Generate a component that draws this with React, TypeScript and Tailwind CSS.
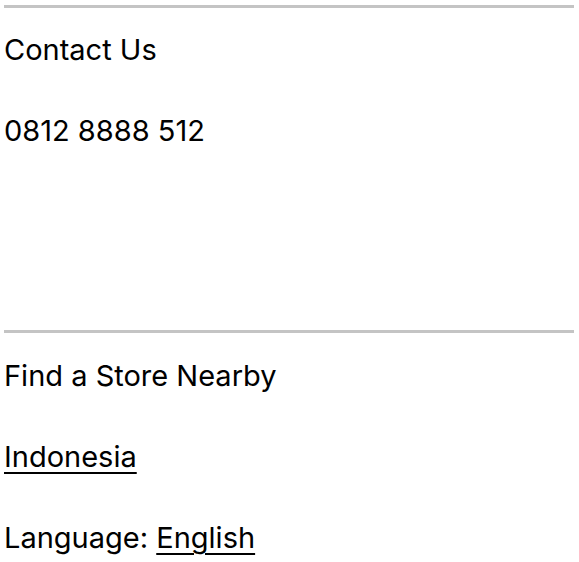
export default function App() {
  return (
    <div className="bg-white pl-1 pr-[5px] pt-[5px] text-black font-['Inter',sans-serif] text-[29px] leading-[81px]">
      <section className="border-t-[3px] border-[#c4c4c4] h-[325px] pt-px">
        <h2 className="font-normal">Contact Us</h2>
        <p>0812 8888 512</p>
      </section>
      <section className="border-t-[3px] border-[#c4c4c4] pt-[2px]">
        <h2 className="font-normal">Find a Store Nearby</h2>
        <p>
          <a href="#" className="underline underline-offset-[5px] decoration-[2px]">Indonesia</a>
        </p>
        <p>
          Language: <a href="#" className="underline underline-offset-[5px] decoration-[2px]">English</a>
        </p>
      </section>
    </div>
  )
}
